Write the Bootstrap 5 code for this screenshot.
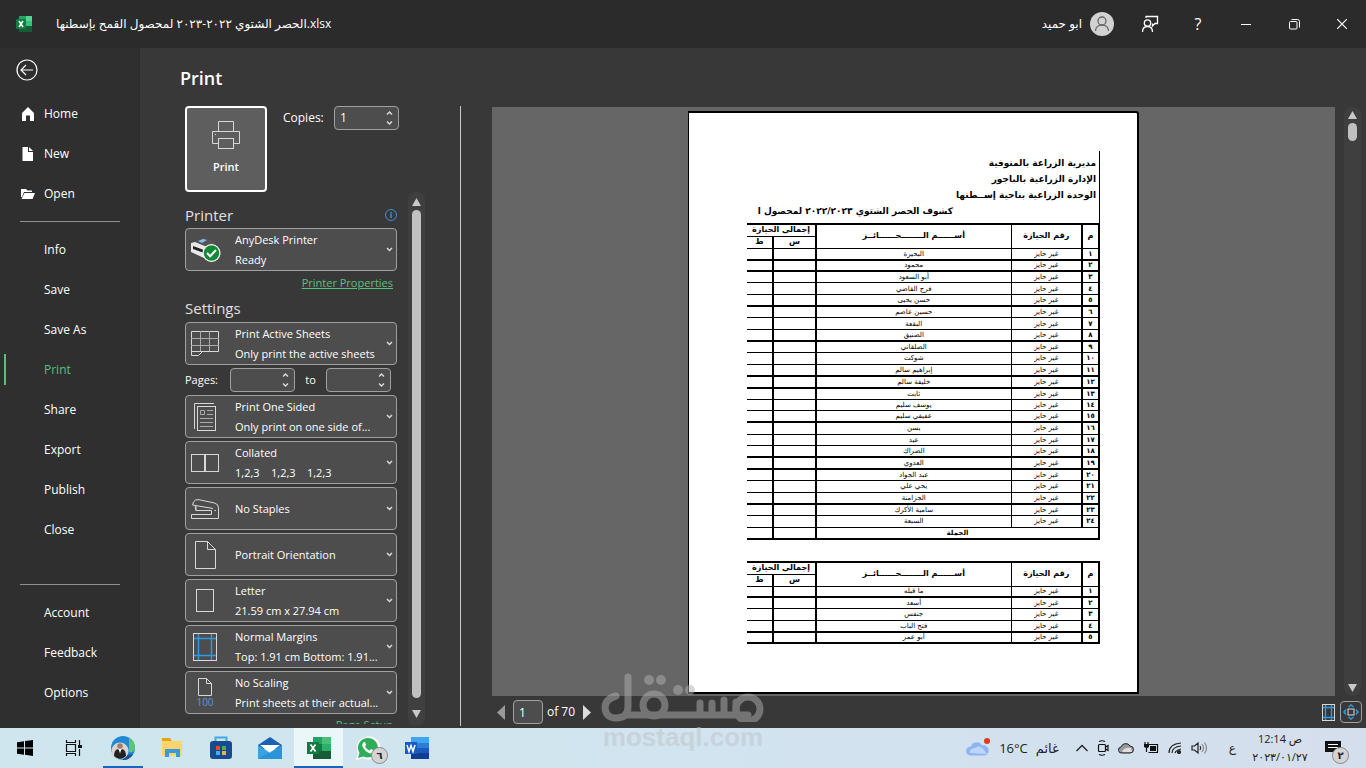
<!DOCTYPE html>
<html lang="en">
<head>
<meta charset="utf-8">
<meta name="viewport" content="width=device-width, initial-scale=1">
<title>Print - Excel</title>
<link href="https://cdn.jsdelivr.net/npm/bootstrap@5.3.0/dist/css/bootstrap.min.css" rel="stylesheet">
<style>
:root { --side:#2f2f2f; --pane:#383838; --field:#4d4d4d; --edge:#a0a0a0; --green:#58c07c; --blue:#2f9be4; }
body { font:12px/20px "Open Sans","DejaVu Sans",sans-serif; color:#fff; background:var(--pane); overflow:hidden; }
svg { display:block; flex:none; }
button { font:inherit; color:inherit; }
.ic { fill:none; stroke:#d8d8d8; }
.plain { background:none; border:0; padding:0; }

.titlebar { height:48px; background:#2b2b2b; padding-left:16px; }
.titlebar .file { margin-left:24px; }
.titlebar .win { width:48px; height:48px; display:flex; align-items:center; justify-content:center; }

.side { width:140px; background:var(--side); border-right:1px solid #2a2a2a; padding-bottom:15px; }
.side .back { height:44px; margin-bottom:2px; padding-left:16px; display:flex; align-items:center; }
.side a { display:flex; align-items:center; height:40px; padding-left:44px; color:#fff; text-decoration:none; position:relative; }
.side a.pic { padding-left:20px; gap:8px; }
.side a.on { color:var(--green); }
.side a.on::before { content:""; position:absolute; left:4px; top:4px; width:2px; height:31px; background:var(--green); }
.side .rule { height:1px; background:#8f8f8f; margin:7px 19px 8px 20px; }

.opts { width:321px; padding:0 0 2px 40px; }
.opts h1 { font-size:18px; line-height:24px; font-weight:600; margin:0; padding:18px 0 16px; }
.optbody { border-right:1px solid #c8c8c8; padding-left:5px; }
.bigprint { width:82px; height:86px; background:#5e5e5e; border:2px solid #fff; border-radius:4px; font-weight:600; font-size:11px; }
.spin { width:65px; height:24px; background:var(--field); border:1px solid var(--edge); border-radius:4px; }
.spin input, .pageno { background:none; border:0; color:#fff; width:51px; padding:0 0 0 5px; outline:0; font:inherit; }
.pageno { width:30px; height:24px; background:var(--field); border:1px solid var(--edge); border-radius:4px; }
.copies { margin:0 61px 0 auto; }
.list { width:212px; overflow:hidden; padding-top:12px; margin-bottom:2px; font-size:11px; }
.list h2 { font-size:15px; line-height:22px; font-weight:500; color:#e0e0e0; margin:0; }
.picks { gap:3px; grid-template-columns:100%; margin-top:3px; }
.pick { display:flex; align-items:center; width:100%; height:43px; padding:0 3px 0 0; background:var(--field); border:1px solid var(--edge); border-radius:4px; text-align:left; white-space:nowrap; }
.pick .pi { width:38px; display:flex; justify-content:center; }
.pick .tx { flex:1; margin-left:11px; white-space:pre; }
.first { margin-top:2px; }
.pages { height:24px; }
.pages label:first-child { width:45px; }
.pages .upto { width:31px; text-align:center; }
.hundred { font-size:10px; line-height:12px; color:#5a95d8; }
.list a { color:var(--green); padding-right:4px; }
.props { padding-top:2px; }
.setup { line-height:16px; }
.sbar { width:17px; background:#3f3f3f; border-radius:8px; padding:6px 0 8px; }
.sbar i { background:#c0c0c0; border-radius:5px; width:9px; }
.sbar .thumb { height:18px; }
.sbar svg { fill:#c8c8c8; }
.lbar { margin-left:11px; }

.mainrow { padding:59px 5px 0 31px; }
.vbar { margin-left:9px; padding:4px 0; }
.view { background:#666; padding-top:4px; }
.paper { width:451px; height:583px; background:#fff; border:solid #000; border-width:2px 2px 2px 1px; border-top-right-radius:3px; padding:38px 37px 0 59px; color:#000; font-family:"DejaVu Sans",sans-serif; }
.head { border-right:1px solid #000; height:72px; font-size:9px; line-height:16px; font-weight:700; padding:4px 3px 0 0; white-space:nowrap; }
.head .ttl { padding-right:143px; }
.reg { width:352px; table-layout:fixed; border-collapse:collapse; font-size:7px; line-height:8px; text-align:center; border-right:2px solid #000; border-bottom:2px solid #000; }
.reg th, .reg td { padding:0; border:1px solid #000; border-left-width:2px; overflow:hidden; white-space:nowrap; }
.reg th { border-top-width:2px; font-size:8px; height:12px; }
.reg th.lo { border-top-width:1px; }
.reg th:nth-child(2), .reg td:nth-child(2) { border-left-width:1px; }
.reg th.edgecell, .reg td.edgecell { border-left:0; }
.reg tr.hv td { border-bottom-width:2px; }
.reg tr.sum td:nth-child(2) { border-left-width:2px; }
.reg td:first-child { font-weight:700; }
.reg tbody tr { height:11px; }
.c1 { width:17px; } .c2 { width:71px; } .c3 { width:195px; } .c4 { width:43px; } .c5 { width:26px; }
.regA { height:317px; }
.regB { height:83px; margin-top:21px; }

.status { height:32px; padding:0 4px 0 36px; }
.fit { width:22px; height:22px; border:1px solid var(--edge); border-radius:4px; padding:2px; margin-left:5px; }

.taskbar { height:40px; background:linear-gradient(90deg,#cfe6ee,#d1e4ef 50%,#d5deed); color:#222; }
.taskbar .app { width:49px; height:40px; display:flex; align-items:center; justify-content:center; position:relative; }
.taskbar .run::after { content:""; position:absolute; left:5px; right:4px; bottom:0; height:2px; background:#1068c0; }
.taskbar .cur { background:#ebf6f8; }
.taskbar .cur::after { left:0; right:0; }
.cnt { position:absolute; width:17px; height:17px; border-radius:50%; background:#d4d4d4; border:1px solid #888; font:700 10px/15px "DejaVu Sans",sans-serif; color:#222; text-align:center; }
.cnt.wa { right:4px; bottom:4px; }
.cnt.nt { left:7px; top:7px; }
.tray { padding-right:4px; }
.temp { font-size:13px; }
.icons { gap:9px; margin:0 21px 0 17px; }
.lang { margin-right:13px; }
.note { margin:0 20px 0 14px; }
.clock { line-height:18px; text-align:center; width:62px; font-size:11px; white-space:nowrap; }

.wm { position:absolute; left:600px; bottom:16px; width:166px; opacity:.5; pointer-events:none; }
.wm div { font:700 26px/30px "Liberation Sans",sans-serif; color:#bfc4c8; text-align:center; }
</style>
</head>
<body>
<div class="d-flex flex-column vh-100 position-relative">

<header class="titlebar d-flex align-items-center">
  <svg width="16" height="16" viewBox="0 0 16 16"><path fill="#21a366" d="M3 0h13v5H3z"/><path fill="#58d18c" d="M10 0h6v5h-6z"/><path fill="#107c41" d="M3 5h7v6H3z"/><path fill="#33c481" d="M10 5h6v5h-6z"/><path fill="#185c37" d="M3 10h13v6H3z"/><rect y="3" width="10" height="10" rx="1" fill="#107c41"/><path d="M3 5l4 6M7 5l-4 6" stroke="#fff" stroke-width="1.500"/></svg>
  <span class="file me-auto">الحصر الشتوي ٢٠٢٢-٢٠٢٣ لمحصول القمح بإسطنها.xlsx</span>
  <span class="me-2">ابو حميد</span>
  <svg class="me-2" width="24" height="24" viewBox="0 0 24 24"><circle cx="12" cy="12" r="12" fill="#d2d2d2"/><g fill="none" stroke="#666" stroke-width="1.300"><circle cx="12" cy="9" r="4"/><path d="M5.500 19c0-4 3-6 6.500-6s6.500 2 6.500 6"/></g></svg>
  <div class="d-flex ms-1">
    <button class="plain win" aria-label="Feedback"><svg width="18" height="18" viewBox="0 0 18 18" fill="none" stroke="#fff" stroke-width="1.300"><circle cx="6.500" cy="8" r="3.200"/><path d="M1.500 17c0-4 2-5.500 5-5.500s5 1.500 5 5.500M5 3V1.500h11.500v7H14L11.500 11V8.500"/></svg></button>
    <button class="plain win fs-6" aria-label="Help">?</button>
    <button class="plain win" aria-label="Minimize"><svg width="10" height="10"><path d="M0 5.500h10" stroke="#fff"/></svg></button>
    <button class="plain win" aria-label="Restore"><svg width="11" height="11" fill="none" stroke="#fff"><rect x=".5" y="2.500" width="7.500" height="7.500" rx="1"/><path d="M2.500 .5h6q2 0 2 2v6"/></svg></button>
    <button class="plain win" aria-label="Close"><svg width="10" height="10"><path d="M0 0l10 10M10 0L0 10" stroke="#fff" stroke-width="1.200"/></svg></button>
  </div>
</header>

<div class="d-flex flex-grow-1 overflow-hidden">
<nav class="side d-flex flex-column flex-shrink-0">
  <button class="plain back" aria-label="Back"><svg width="22" height="22" viewBox="0 0 22 22" fill="none" stroke="#fff" stroke-width="1.200"><circle cx="11" cy="11" r="10"/><path d="M17 11H5.500M10 6l-5 5 5 5"/></svg></button>
  <a class="pic" href="#"><svg width="16" height="16" viewBox="0 0 16 16" fill="#fff"><path d="M8 1l6 6v8h-4V9.500H6V15H2V7z"/></svg>Home</a>
  <a class="pic" href="#"><svg width="16" height="16" viewBox="0 0 16 16" fill="#fff"><path d="M2.500 1H8v5h5v9H2.500z"/><path d="M9 1l4 4H9z"/></svg>New</a>
  <a class="pic" href="#"><svg width="16" height="16" viewBox="0 0 16 16" fill="#fff"><path d="M1 3h5l1.500 1.500H12V6H4l-2 5H1z"/><path d="M4.500 7H15l-2.500 6h-11z"/></svg>Open</a>
  <div class="rule"></div>
  <a href="#">Info</a><a href="#">Save</a><a href="#">Save As</a><a class="on" href="#">Print</a><a href="#">Share</a><a href="#">Export</a><a href="#">Publish</a><a href="#">Close</a>
  <div class="rule mt-auto"></div>
  <a href="#">Account</a><a href="#">Feedback</a><a href="#">Options</a>
</nav>

<section class="opts d-flex flex-column flex-shrink-0">
  <h1>Print</h1>
  <div class="optbody d-flex flex-column flex-grow-1 overflow-hidden">
    <div class="d-flex align-items-start flex-shrink-0">
      <button class="bigprint d-flex flex-column align-items-center justify-content-center gap-2 p-0">
        <svg class="ic" width="28" height="28" viewBox="0 0 28 28"><path d="M6.500 10.500V.5h15v10M6.500 22.500h-6v-12h27v12h-6"/><rect x="6.500" y="17.500" width="15" height="10"/><path d="M3 13.500h1"/></svg>Print</button>
      <label class="ms-3 pt-1 lh-sm" for="copies">Copies:</label>
      <div class="spin copies d-flex align-items-center"><input id="copies" value="1"><svg class="ic" width="7" height="18" viewBox="0 0 7 18" stroke-width="1.500"><path d="M1 5.500L3.500 3 6 5.500M1 12.500L3.500 15 6 12.500"/></svg></div>
    </div>
    <div class="d-flex flex-grow-1 overflow-hidden">
      <div class="list d-flex flex-column">
        <div class="d-flex align-items-center justify-content-between flex-shrink-0"><h2>Printer</h2>
          <svg width="12" height="12" viewBox="0 0 12 12" fill="none" stroke="#3d8fdc"><circle cx="6" cy="6" r="5.500"/><path d="M6 3v1.500M6 5v4" stroke-width="1.500"/></svg></div>
        <button class="pick first flex-shrink-0"><span class="pi"><svg width="32" height="28" viewBox="0 0 32 28"><path fill="#555" d="M6 6l8-4 13 4-9 6z"/><path fill="#8fb8e8" d="M9 5l5-2 4 1-5 3z"/><path fill="#e8e8e8" d="M2 7l4-1 12 5v9l-3 2L2 16z"/><path fill="#222" d="M4 10l11 4v3L4 13z"/><circle cx="22.500" cy="17" r="9" fill="#fff"/><circle cx="22.500" cy="17" r="7.800" fill="#128a35"/><path d="M18 17l3.200 3.200L27 14" stroke="#fff" stroke-width="2" fill="none"/></svg></span><span class="tx">AnyDesk Printer
Ready</span><svg class="ic" width="7" height="5" stroke-width="1.500"><path d="M1 1l2.500 2.500L6 1"/></svg></button>
        <div class="text-end flex-shrink-0 props"><a href="#">Printer Properties</a></div>
        <h2 class="pt-1">Settings</h2>
        <div class="picks d-grid flex-shrink-0">
        <button class="pick"><span class="pi"><svg class="ic" width="28" height="26" viewBox="0 0 28 26"><path d="M8 20.500h19.500V.5H.5v24h7l4-4H.5"/><path stroke="#aaa" d="M9.500 0v20M18.500 0v20M0 7.500h28M0 14.500h28"/></svg></span><span class="tx">Print Active Sheets
Only print the active sheets</span><svg class="ic" width="7" height="5" stroke-width="1.500"><path d="M1 1l2.500 2.500L6 1"/></svg></button>
        <div class="pages d-flex align-items-center">
          <label for="from">Pages:</label>
          <div class="spin d-flex align-items-center"><input id="from"><svg class="ic" width="7" height="18" viewBox="0 0 7 18" stroke-width="1.500"><path d="M1 5.500L3.500 3 6 5.500M1 12.500L3.500 15 6 12.500"/></svg></div>
          <label for="to" class="upto">to</label>
          <div class="spin d-flex align-items-center"><input id="to"><svg class="ic" width="7" height="18" viewBox="0 0 7 18" stroke-width="1.500"><path d="M1 5.500L3.500 3 6 5.500M1 12.500L3.500 15 6 12.500"/></svg></div>
        </div>
        <button class="pick"><span class="pi"><svg class="ic" width="22" height="28" viewBox="0 0 22 28"><path d="M20 .5H.5V26"/><rect x="3.500" y="3.500" width="18" height="24"/><path stroke="#aaa" d="M6.500 7.500h4v4h-4zM13 7.500h6M13 11.500h6M6 15.500h13M6 19.500h13M6 23.500h13"/></svg></span><span class="tx">Print One Sided
Only print on one side of...</span><svg class="ic" width="7" height="5" stroke-width="1.500"><path d="M1 1l2.500 2.500L6 1"/></svg></button>
        <button class="pick"><span class="pi"><svg class="ic" width="28" height="18"><rect x=".5" y=".5" width="13" height="17"/><rect x="14.500" y=".5" width="13" height="17"/></svg></span><span class="tx">Collated
1,2,3    1,2,3    1,2,3</span><svg class="ic" width="7" height="5" stroke-width="1.500"><path d="M1 1l2.500 2.500L6 1"/></svg></button>
        <button class="pick"><span class="pi"><svg class="ic" width="28" height="20" viewBox="0 0 28 20"><path d="M.5 19.500v-4h20v-4H5l-1-4M.5 19.500h27V9q0-4-4-5L8 .7Q4 0 2.500 3L1.500 6 22 9.500"/><path d="M5 7v4.500M23.500 11.500h1.500"/></svg></span><span class="tx">No Staples</span><svg class="ic" width="7" height="5" stroke-width="1.500"><path d="M1 1l2.500 2.500L6 1"/></svg></button>
        <button class="pick"><span class="pi"><svg class="ic" width="21" height="28"><path d="M.5 .5h12l8 8v19H.5zM12.500 .5v8h8"/></svg></span><span class="tx">Portrait Orientation</span><svg class="ic" width="7" height="5" stroke-width="1.500"><path d="M1 1l2.500 2.500L6 1"/></svg></button>
        <button class="pick"><span class="pi"><svg class="ic" width="18" height="23"><rect x=".5" y=".5" width="17" height="22"/></svg></span><span class="tx">Letter
21.59 cm x 27.94 cm</span><svg class="ic" width="7" height="5" stroke-width="1.500"><path d="M1 1l2.500 2.500L6 1"/></svg></button>
        <button class="pick"><span class="pi"><svg class="ic" width="24" height="28"><rect x=".5" y=".5" width="23" height="27"/><path stroke="#2f9be4" stroke-width="1.400" d="M5.500 1v26M18.500 1v26M1 5.500h22M1 22.500h22"/></svg></span><span class="tx">Normal Margins
Top: 1.91 cm Bottom: 1.91...</span><svg class="ic" width="7" height="5" stroke-width="1.500"><path d="M1 1l2.500 2.500L6 1"/></svg></button>
        <button class="pick"><span class="pi flex-column align-items-center"><svg class="ic" width="14" height="18"><path d="M.5 .5h8l5 5v12H.5zM8.500 .5v5h5"/></svg><span class="hundred">100</span></span><span class="tx">No Scaling
Print sheets at their actual...</span><svg class="ic" width="7" height="5" stroke-width="1.500"><path d="M1 1l2.500 2.500L6 1"/></svg></button>
        <div class="text-end setup"><a href="#">Page Setup</a></div>
        </div>
      </div>
      <div class="sbar lbar d-flex flex-column align-items-center gap-1"><svg width="9" height="8"><path d="M4.500 0L9 8H0z"/></svg><i class="flex-grow-1"></i><svg class="mt-2" width="9" height="8"><path d="M4.500 8L9 0H0z"/></svg></div>
    </div>
  </div>
</section>

<main class="d-flex flex-column flex-grow-1 overflow-hidden">
  <div class="d-flex flex-grow-1 overflow-hidden mainrow">
    <div class="view d-flex justify-content-center align-items-start flex-grow-1">
      <div class="paper" dir="rtl" lang="ar">
        <div class="head">
          <div>مديرية الزراعة بالمنوفية</div>
          <div>الإدارة الزراعية بالباجور</div>
          <div>الوحدة الزراعية بناحية إســطنها</div>
          <div class="ttl">كشوف الحصر الشتوي ٢٠٢٢/٢٠٢٣ لمحصول ا</div>
        </div>
        <table class="reg regA">
          <colgroup><col class="c1"><col class="c2"><col class="c3"><col class="c4"><col class="c5"></colgroup>
          <thead><tr><th rowspan="2">م</th><th rowspan="2">رقم الحيازة</th><th rowspan="2">أســــــم الــــــــحــــــائــز</th><th colspan="2" class="edgecell">إجمالي الحيازة</th></tr>
          <tr><th class="lo">س</th><th class="edgecell lo">ط</th></tr></thead>
          <tbody>
          <tr class="hv"><td>١</td><td>غير حايز</td><td>البحيرة</td><td></td><td class="edgecell"></td></tr>
          <tr class="hv"><td>٢</td><td>غير حايز</td><td>محمود</td><td></td><td class="edgecell"></td></tr>
          <tr><td>٣</td><td>غير حايز</td><td>أبو السعود</td><td></td><td class="edgecell"></td></tr>
          <tr><td>٤</td><td>غير حايز</td><td>فرج القاضي</td><td></td><td class="edgecell"></td></tr>
          <tr class="hv"><td>٥</td><td>غير حايز</td><td>حسن يحيى</td><td></td><td class="edgecell"></td></tr>
          <tr><td>٦</td><td>غير حايز</td><td>حسين عاصم</td><td></td><td class="edgecell"></td></tr>
          <tr><td>٧</td><td>غير حايز</td><td>البقعة</td><td></td><td class="edgecell"></td></tr>
          <tr class="hv"><td>٨</td><td>غير حايز</td><td>الصنيق</td><td></td><td class="edgecell"></td></tr>
          <tr><td>٩</td><td>غير حايز</td><td>الصلقاني</td><td></td><td class="edgecell"></td></tr>
          <tr><td>١٠</td><td>غير حايز</td><td>شوكت</td><td></td><td class="edgecell"></td></tr>
          <tr class="hv"><td>١١</td><td>غير حايز</td><td>إبراهيم سالم</td><td></td><td class="edgecell"></td></tr>
          <tr class="hv"><td>١٢</td><td>غير حايز</td><td>خليفة سالم</td><td></td><td class="edgecell"></td></tr>
          <tr><td>١٣</td><td>غير حايز</td><td>ثابت</td><td></td><td class="edgecell"></td></tr>
          <tr><td>١٤</td><td>غير حايز</td><td>يوسف سليم</td><td></td><td class="edgecell"></td></tr>
          <tr class="hv"><td>١٥</td><td>غير حايز</td><td>عفيفي سليم</td><td></td><td class="edgecell"></td></tr>
          <tr><td>١٦</td><td>غير حايز</td><td>يسن</td><td></td><td class="edgecell"></td></tr>
          <tr><td>١٧</td><td>غير حايز</td><td>عيد</td><td></td><td class="edgecell"></td></tr>
          <tr class="hv"><td>١٨</td><td>غير حايز</td><td>الضراك</td><td></td><td class="edgecell"></td></tr>
          <tr class="hv"><td>١٩</td><td>غير حايز</td><td>العدوي</td><td></td><td class="edgecell"></td></tr>
          <tr><td>٢٠</td><td>غير حايز</td><td>عبد الجواد</td><td></td><td class="edgecell"></td></tr>
          <tr><td>٢١</td><td>غير حايز</td><td>يحي علي</td><td></td><td class="edgecell"></td></tr>
          <tr class="hv"><td>٢٢</td><td>غير حايز</td><td>الجزامنة</td><td></td><td class="edgecell"></td></tr>
          <tr><td>٢٣</td><td>غير حايز</td><td>سامية الأكرك</td><td></td><td class="edgecell"></td></tr>
          <tr><td>٢٤</td><td>غير حايز</td><td>السبعة</td><td></td><td class="edgecell"></td></tr>
          <tr class="hv sum"><td colspan="3">الجملة</td><td></td><td class="edgecell"></td></tr>
          </tbody>
        </table>
        <table class="reg regB">
          <colgroup><col class="c1"><col class="c2"><col class="c3"><col class="c4"><col class="c5"></colgroup>
          <thead><tr><th rowspan="2">م</th><th rowspan="2">رقم الحيازة</th><th rowspan="2">أســــــم الــــــــحــــــائــز</th><th colspan="2" class="edgecell">إجمالي الحيازة</th></tr>
          <tr><th class="lo">س</th><th class="edgecell lo">ط</th></tr></thead>
          <tbody>
          <tr class="hv"><td>١</td><td>غير حايز</td><td>ما قبله</td><td></td><td class="edgecell"></td></tr>
          <tr><td>٢</td><td>غير حايز</td><td>أسعد</td><td></td><td class="edgecell"></td></tr>
          <tr><td>٣</td><td>غير حايز</td><td>جنفس</td><td></td><td class="edgecell"></td></tr>
          <tr class="hv"><td>٤</td><td>غير حايز</td><td>فتح الباب</td><td></td><td class="edgecell"></td></tr>
          <tr class="hv"><td>٥</td><td>غير حايز</td><td>أبو عمر</td><td></td><td class="edgecell"></td></tr>
          </tbody>
        </table>
      </div>
    </div>
    <div class="sbar d-flex flex-column align-items-center gap-1 vbar"><svg width="9" height="8"><path d="M4.500 0L9 8H0z"/></svg><i class="thumb"></i><svg class="mt-auto" width="9" height="8"><path d="M4.500 8L9 0H0z"/></svg></div>
  </div>
  <div class="status d-flex align-items-center flex-shrink-0">
    <button class="plain me-2" aria-label="Previous page"><svg width="8" height="15"><path fill="#999" d="M8 0v15L0 7.500z"/></svg></button>
    <input class="pageno" aria-label="Current page" value="1"><span class="ms-1">of 70</span>
    <button class="plain ms-2" aria-label="Next page"><svg width="8" height="15"><path fill="#ddd" d="M0 0v15l8-7.500z"/></svg></button>
    <button class="plain ms-auto" aria-label="Show margins"><svg class="ic" width="13" height="17"><rect x=".5" y=".5" width="12" height="16"/><path stroke="#2f9be4" stroke-width="1.400" d="M3.500 1v15M9.500 1v15M1 3.500h11M1 13.500h11"/></svg></button>
    <button class="plain fit" aria-label="Zoom to page"><svg class="ic" width="16" height="16" viewBox="0 0 16 16"><rect x="5" y="5" width="6" height="6"/><path stroke="#2f9be4" stroke-width="1.500" d="M5.500 3L8 1l2.500 2M5.500 13L8 15l2.500-2M3 5.500L1 8l2 2.500M13 5.500L15 8l-2 2.500"/></svg></button>
  </div>
</main>
</div>

<footer class="taskbar d-flex align-items-center flex-shrink-0">
  <button class="plain app" aria-label="Start"><svg width="16" height="16"><path d="M0 2.300L7 1.300V7.500H0zM8 1.100L16 0v7.500H8zM0 8.500h7v6.200l-7-1zM8 8.500h8V16l-8-1.200z"/></svg></button>
  <button class="plain app" aria-label="Task view"><svg width="18" height="16" fill="none" stroke="#111" stroke-width="1.200"><path d="M1.500 0v2.500h9V0M1.500 16v-2.500h9V16M1.500 4.500h9v7h-9zM14.500 0v5M14.500 9v7"/><path d="M13 5h4v3h-4z" fill="#111" stroke="none"/></svg></button>
  <button class="plain app run" aria-label="Browser"><svg width="24" height="24" viewBox="0 0 24 24"><circle cx="12" cy="12" r="12" fill="#2188d4"/><path fill="#5ec66c" d="M18 2q6 4 6 10-1 5-6 4z"/><path fill="#1a4f9c" d="M12 24q7 0 10-6-6 2-10-1z"/><circle cx="9" cy="15" r="8.500" fill="#d9d6d2"/><circle cx="9" cy="10" r="2.800" fill="#a58068"/><path fill="#222" d="M3 20q0-6 4-7l2 3 2-3q4 1 4 7-6 6-12 0z"/><path fill="#fff" d="M8 13h2l-1 5z"/></svg></button>
  <button class="plain app" aria-label="File Explorer"><svg width="22" height="20" viewBox="0 0 22 20"><path fill="#e8a020" d="M1 0h8l2 3H1z"/><path fill="#ffd56a" d="M1 3h20v15H1z"/><path fill="#3a98dd" d="M4 11h15v8h-4v-4H8v4H4z"/></svg></button>
  <button class="plain app" aria-label="Store"><svg width="24" height="24" viewBox="0 0 24 24"><path fill="none" stroke="#3fa9e6" stroke-width="2" d="M6.500 6V1.500h11V6"/><rect x="1" y="5" width="22" height="18" rx="3" fill="#174a8f"/><path fill="#e8472c" d="M7 10h4v4H7z"/><path fill="#4fae42" d="M13 10h4v4h-4z"/><path fill="#45b0e8" d="M7 15h4v4H7z"/><path fill="#f0b040" d="M13 15h4v4h-4z"/></svg></button>
  <button class="plain app" aria-label="Mail"><svg width="24" height="24" viewBox="0 0 24 24"><path fill="#1a61b4" d="M0 9l12-8 12 8v4H0z"/><path fill="#fff" d="M2 9h20l-10 8z"/><path fill="#37a3e2" d="M0 9l12 8 12-8v14H0z"/><path fill="#1e86d0" d="M0 23l24-14v14z" opacity=".5"/></svg></button>
  <button class="plain app run cur" aria-label="Excel"><svg width="24" height="22" viewBox="0 0 24 22"><path fill="#21a366" d="M6 0h9v7H6z"/><path fill="#48c078" d="M15 0h9v7h-9z"/><path fill="#107c41" d="M6 7h9v7H6z"/><path fill="#2fae6a" d="M15 7h9v7h-9z"/><path fill="#185c37" d="M6 14h18v8H6z"/><path fill="#107c41" d="M0 5h12v12H0z"/><path d="M3.500 7.500l5 7M8.500 7.500l-5 7" stroke="#fff" stroke-width="1.800"/></svg></button>
  <button class="plain app" aria-label="WhatsApp"><svg width="24" height="24" viewBox="0 0 24 24"><path fill="#fff" d="M0 24l2-7A12 11.500 0 1 1 7 22z"/><path fill="#2fae59" d="M2 22l1.500-5A10 9.800 0 1 1 7.500 20.500z"/><path fill="#fff" d="M8 6q-3 2-1 5.500 3 5 7.500 6 3 0 3.500-3l-3-1.500-1.500 1.500q-3-1-4.500-4l1.200-1.500L9 6z"/></svg><span class="cnt wa">٦</span></button>
  <button class="plain app" aria-label="Word"><svg width="24" height="22" viewBox="0 0 24 22"><path fill="#41a5ee" d="M6 0h18v6H6z"/><path fill="#2b7cd3" d="M6 6h18v5H6z"/><path fill="#185abd" d="M6 11h18v5H6z"/><path fill="#103f91" d="M6 16h18v6H6z"/><path fill="#185abd" d="M0 5h12v12H0z"/><path d="M2 8l2 6.500L6 8.500l2 6L10 8" fill="none" stroke="#fff" stroke-width="1.500"/></svg></button>
  <div class="tray d-flex align-items-center ms-auto">
    <svg width="25" height="22" viewBox="0 0 25 22"><path fill="#8fb4f0" d="M5 18.500a5 4.500 0 0 1 0-9 6 6 0 0 1 11-1 5 5 0 0 1 3 10z"/><path fill="#bcd6fa" d="M4 16a5 4 0 0 1 5-5q5-4 9 2l3 4z"/><circle cx="21" cy="4" r="3" fill="#dd3a24"/></svg>
    <span class="ms-2 temp">16°C</span><span class="ms-2 temp">غائم</span>
    <div class="d-flex align-items-center icons">
    <svg width="12" height="8" fill="none" stroke="#222" stroke-width="1.300"><path d="M.5 7L6 1.500 11.500 7"/></svg>
    <svg width="12" height="16" fill="none" stroke="#111" stroke-width="1.200"><rect x="1.500" y="4.500" width="7" height="7" rx="1"/><path d="M8.500 7l2.500-1.500v5L8.500 9M2 1.500q3-1.500 6 0M2 14.500q3 1.500 6 0"/></svg>
    <svg width="16" height="12" viewBox="0 0 16 12"><path fill="#999" stroke="#222" d="M4 11a3 3 0 0 1-1-6 5 5 0 0 1 9-1 3.500 3.500 0 0 1 0 7z"/><path fill="#ddd" d="M4 10q2-5 9-4l1 4z"/></svg>
    <svg width="16" height="12"><path fill="none" stroke="#111" stroke-width="1.200" d="M5.500 2.500h9v8h-9M2 0v3M5 0v3M3.500 6v4"/><path fill="#111" d="M1 2h5v3q-2 2-5 0zM7 4h6v5H7z"/></svg>
    <svg width="14" height="12" fill="none" stroke="#222" stroke-width="1.200"><path d="M1 11Q1 2 13 1M4 11q0-6 9-7M7 11q1-3 6-4"/><circle cx="11" cy="10" r="1.500" fill="#222"/></svg>
    <svg width="17" height="14" fill="none" stroke="#222" stroke-width="1.200"><path d="M1 5v4h2.500L7 12V2L3.500 5zM9 5q1.500 2 0 4"/><path stroke="#888" d="M11 3q3 4 0 8M13.500 1.500q4 5.500 0 11"/></svg>
    </div>
    <span class="lang">ع</span>
    <div class="clock"><div>12:14 ص</div><div>٢٠٢٣/٠١/٢٧</div></div>
    <button class="plain position-relative note" aria-label="Notifications"><svg width="17" height="17"><path fill="#111" d="M0 1h16v11h-3v4l-4-4H0z"/><path stroke="#fff" d="M3 4.500h10M3 7.500h10"/></svg><span class="cnt nt">٢</span></button>
  </div>
</footer>

<div class="wm"><svg width="166" height="50" viewBox="0 0 166 50" fill="none" stroke="#b0b0b0" stroke-width="7" stroke-linecap="round" stroke-linejoin="round"><path d="M16 24Q5 27 5 36q1 10 11 10 12 0 12-11V5M28 43H148M124 43V28M112 43V31M100 43V31M136 43V30"/><circle cx="54" cy="33" r="11"/><circle cx="148" cy="37" r="12"/><g fill="#b0b0b0" stroke="none"><circle cx="49" cy="8" r="5"/><circle cx="61" cy="8" r="5"/><circle cx="78" cy="18" r="5"/><circle cx="90" cy="18" r="5"/></g></svg><div>mostaql.com</div></div>
</div>
<script src="https://cdn.jsdelivr.net/npm/bootstrap@5.3.0/dist/js/bootstrap.bundle.min.js"></script>
</body>
</html>
